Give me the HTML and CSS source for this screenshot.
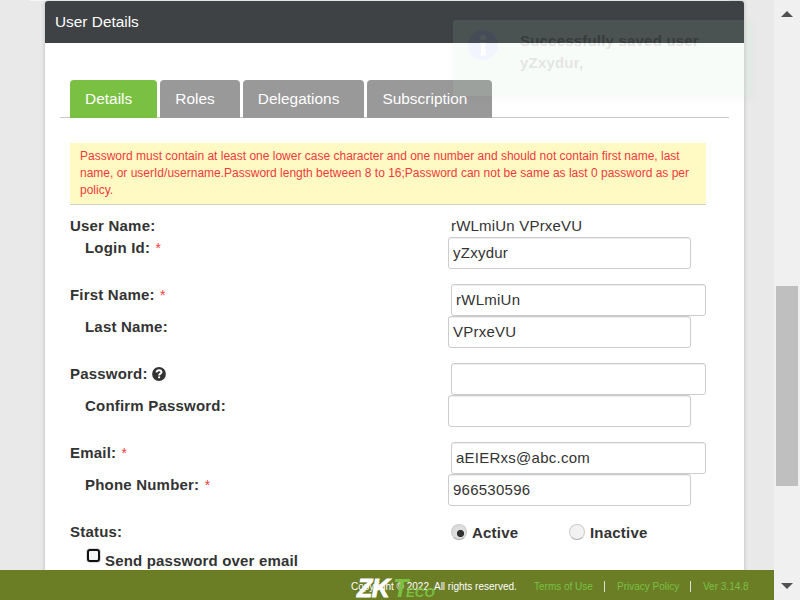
FILE: index.html
```html
<!DOCTYPE html>
<html lang="en">
<head>
<meta charset="utf-8">
<title>User Details</title>
<link rel="stylesheet" href="styles.css">
</head>
<body>
<div class="window">
  <main class="page">
    <div class="previous-panel"></div>
    <section class="panel">
      <h1 class="panel-title">User Details</h1>
      <nav class="tabs">
        <a class="tab active">Details</a>
        <a class="tab">Roles</a>
        <a class="tab">Delegations</a>
        <a class="tab">Subscription</a>
      </nav>
      <div class="form">
        <p class="notice">Password must contain at least one lower case character and one number and should not contain first name, last<br>name, or userId/username.Password length between 8 to 16;Password can not be same as last 0 password as per<br>policy.</p>
        <div class="group">
          <div class="row short"><label>User Name:</label><span class="value">rWLmiUn VPrxeVU</span></div>
          <div class="row sub"><label>Login Id: <i>*</i></label><input type="text" value="yZxydur"></div>
        </div>
        <div class="group">
          <div class="row"><label>First Name: <i>*</i></label><input type="text" value="rWLmiUn"></div>
          <div class="row sub"><label>Last Name:</label><input type="text" value="VPrxeVU"></div>
        </div>
        <div class="group">
          <div class="row"><label>Password: <svg class="help" viewBox="0 0 14 14"><circle cx="7" cy="7" r="6.9" fill="#333"/><path d="M4.500 5.400C4.700 3.900 5.700 3.200 7 3.200C8.500 3.200 9.500 4 9.500 5.200C9.500 6.600 7.100 6.700 7.100 8.500" fill="none" stroke="#fff" stroke-width="1.900"/><path d="M6.100 9.400h2v1.800h-2z" fill="#fff"/></svg></label><input type="text"></div>
          <div class="row sub"><label>Confirm Password:</label><input type="text"></div>
        </div>
        <div class="group">
          <div class="row"><label>Email: <i>*</i></label><input type="text" value="aEIERxs@abc.com"></div>
          <div class="row sub"><label>Phone Number: <i>*</i></label><input type="text" value="966530596"></div>
        </div>
        <div class="group">
          <div class="row short"><label>Status:</label>
            <div class="options">
              <span class="option"><span class="radio checked"></span>Active</span>
              <span class="option"><span class="radio"></span>Inactive</span>
            </div>
          </div>
          <div class="send"><span class="checkbox"></span><span class="send-text">Send password over email</span></div>
        </div>
      </div>
    </section>
    <div class="toast">
      <svg class="info" viewBox="0 0 30 30"><circle cx="15" cy="15" r="15" fill="#8aa4ff"/><circle cx="15" cy="7.500" r="2.800" fill="#fff"/><path d="M12 12h5.500v12h1v1.500h-6v-1.500h.500v-10h-1z" fill="#fff"/></svg>
      <div class="toast-text">Successfully saved user<br>yZxydur,</div>
    </div>
    <footer class="footer">
      <span class="copyright">Copyright © 2022. All rights reserved.</span>
      <a class="terms">Terms of Use</a>
      <a class="privacy">Privacy Policy</a>
      <a class="version">Ver 3.14.8</a>
      <div class="logo"><span class="zk">ZK</span><span class="t">T</span><span class="eco">ECO</span></div>
    </footer>
  </main>
  <aside class="scrollbar">
    <svg class="arrow" viewBox="0 0 12 6"><path d="M0 6L6 0l6 6z" fill="#505050"/></svg>
    <div class="thumb"></div>
    <svg class="arrow down" viewBox="0 0 12 6"><path d="M0 0h12L6 6z" fill="#505050"/></svg>
  </aside>
</div>
</body>
</html>
```

FILE: styles.css
```css
* { box-sizing: border-box; }
body {
  margin: 0;
  overflow: hidden;
  color: #333;
  font: 15px/22px "Liberation Sans", Arial, sans-serif;
  letter-spacing: 0.2px;
}
.window { display: flex; width: 800px; height: 600px; overflow: hidden; }
.page { position: relative; width: 774px; height: 600px; overflow: hidden; background: #e9e9e9; }
.previous-panel { width: 699px; height: 1px; margin-left: 30px; background: #f5f8f5; }
.panel {
  width: 699px;
  height: 620px;
  margin-left: 45px;
  background: #fff;
  border-radius: 3px 3px 0 0;
  box-shadow: 0 0 4px rgba(0, 0, 0, 0.2);
}
.panel-title {
  height: 42px;
  margin: 0;
  padding-left: 10px;
  color: #fff;
  background: #3e4244;
  border-radius: 3px 3px 0 0;
  font-size: 15.4px;
  font-weight: normal;
  letter-spacing: 0;
  line-height: 41px;
}
.tabs {
  display: flex;
  gap: 3px;
  width: 669px;
  height: 38px;
  margin: 37px 0 0 15px;
  padding-left: 10px;
  background: linear-gradient(#c8c8c8, #c8c8c8) 0 100% / 100% 1px no-repeat;
}
.tab {
  height: 38px;
  padding: 0 25px 0 15px;
  color: #fff;
  background: #999;
  border-radius: 4px 4px 0 0;
  font-size: 15.4px;
  letter-spacing: 0.03px;
  line-height: 37px;
}
.tab.active { background: #7ac143; }
.form { width: 636px; margin: 25px 0 0 25px; }
.notice {
  height: 62px;
  margin: 0 0 10px;
  padding: 5px 10px 0;
  color: #f33a3a;
  background: #fff9c4;
  border-bottom: 1px solid #d0d0c4;
  font-size: 12px;
  letter-spacing: 0;
  line-height: 17px;
  white-space: nowrap;
}
.group { margin-bottom: 15px; }
.row { display: grid; grid-template-columns: 381px 255px; height: 32px; }
.row.short { height: 22px; }
.row.sub { grid-template-columns: 363px 243px; padding-left: 15px; }
label { font-weight: bold; white-space: nowrap; }
label i { margin-left: 1px; color: #f33a3a; font-size: 14px; font-style: normal; font-weight: normal; }
.help { width: 14px; height: 14px; vertical-align: -2px; }
input {
  height: 32px;
  padding: 0 4px 2px;
  color: #333;
  background: #fff;
  border: 1px solid #ccc;
  border-radius: 3px;
  box-shadow: inset 0 1px 1px rgba(0, 0, 0, 0.075);
  font: inherit;
  letter-spacing: 0.25px;
}
.options { display: flex; font-weight: bold; line-height: 24px; }
.option { display: flex; align-items: center; width: 118px; height: 24px; gap: 5px; }
.radio {
  width: 16px;
  height: 16px;
  margin-bottom: 2px;
  border: 1px solid #ccc;
  border-bottom-color: #aaa;
  border-radius: 50%;
  background: #f2f2f2;
}
.radio.checked { background: radial-gradient(circle at 8.5px 8.5px, #333 0 3.300px, #dedede 3.900px 6px, #d0d0d0); }
.send { display: flex; gap: 5px; padding: 5px 0 0 16px; font-weight: bold; letter-spacing: 0.16px; }
.checkbox { width: 13px; height: 13px; margin: 1px 0 0 1px; border: 2px solid #111; border-radius: 3px; box-shadow: 0 0 0 1px #ddd; background: #f5f5f5; }
.send-text { margin-top: 2px; }
.toast {
  position: absolute;
  top: 20px;
  left: 453px;
  width: 300px;
  height: 76px;
  padding: 10px 15px;
  display: flex;
  gap: 22px;
  background: #b9ebc3;
  border-radius: 3px;
  box-shadow: 0 3px 5px rgba(0, 0, 0, 0.2);
  opacity: 0.1;
}
.info { width: 30px; height: 30px; }
.toast-text { color: #000; font-weight: bold; white-space: nowrap; }
.footer {
  position: absolute;
  bottom: 0;
  left: 0;
  display: flex;
  width: 774px;
  height: 30px;
  padding-left: 351px;
  background: #6b7d25;
  font-size: 10px;
  line-height: 34px;
  letter-spacing: 0;
  white-space: nowrap;
}
.copyright { width: 183px; color: #fff; }
.footer a { color: #7ac143; }
.terms { width: 83px; }
.privacy { width: 86px; }
.terms, .privacy { background: linear-gradient(#ddd, #ddd) 70px 11px / 1px 11px no-repeat; }
.privacy { background-position: 73px 11px; }
.logo {
  position: absolute;
  top: 8px;
  left: 357px;
  display: flex;
  height: 20px;
  font-style: italic;
  font-weight: bold;
  line-height: 20px;
}
.zk { width: 36px; color: #fff; font-size: 25px; letter-spacing: -0.5px; -webkit-text-stroke: 0.8px #fff; }
.t { width: 13px; color: #7ac143; font-size: 25px; }
.eco { padding-top: 5px; color: #7ac143; font-size: 13px; letter-spacing: 0.2px; }
.scrollbar {
  display: flex;
  flex-direction: column;
  align-items: center;
  justify-content: space-between;
  width: 26px;
  height: 600px;
  padding: 11px 0 11px;
  background: #f0f0f0;
}
.arrow { width: 12px; height: 6px; }
.thumb { width: 22px; height: 200px; margin-top: 172px; background: #bfbfbf; }
```
